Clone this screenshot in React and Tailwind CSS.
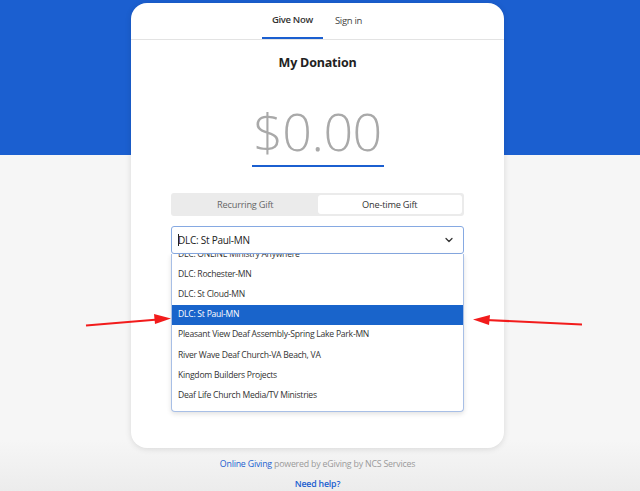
import { ChevronDown } from 'lucide-react';

const funds = [
  'DLC: ONLINE Ministry Anywhere',
  'DLC: Rochester-MN',
  'DLC: St Cloud-MN',
  'DLC: St Paul-MN',
  'Pleasant View Deaf Assembly-Spring Lake Park-MN',
  'River Wave Deaf Church-VA Beach, VA',
  'Kingdom Builders Projects',
  'Deaf Life Church Media/TV Ministries',
];

const Arrows = () => (
  <svg className="absolute left-0 top-0 pointer-events-none" width="640" height="491" viewBox="0 0 640 491">
    <line x1="86" y1="325.5" x2="158" y2="319.5" stroke="#f21b1b" strokeWidth="2" />
    <polygon points="171,318.5 154,314 155,324" fill="#f21b1b" />
    <line x1="582" y1="324.5" x2="486" y2="320" stroke="#f21b1b" strokeWidth="2" />
    <polygon points="473,319.5 490,315 489,325" fill="#f21b1b" />
  </svg>
);

export default function App() {
  return (
    <div
      className="relative w-[640px] h-[491px] overflow-hidden bg-[linear-gradient(to_bottom,#1b5fd0_0px,#1b5fd0_155px,#f6f6f6_155px,#f6f6f6_440px,#ececec_491px)] text-[#222]"
      style={{ fontFamily: '"Open Sans", "Noto Sans", sans-serif' }}
    >
      <div className="flex flex-col items-center pt-[3px] pr-[5px]">
        <div className="w-[373px] bg-white rounded-[16px] shadow-[0_1px_6px_rgba(0,0,0,0.12)] pb-[36px]">
          <div className="h-[37px] border-b border-[#e3e3e3] flex justify-center gap-[12px] pr-[11px]">
            <div className="h-[36px] w-[61px] flex items-center justify-center border-b-2 border-[#1b5fd0] text-[9.5px] tracking-[-0.35px] font-semibold text-[#333]">
              Give Now
            </div>
            <div className="h-[36px] flex items-center justify-center text-[9.5px] tracking-[-0.3px] text-[#444]">
              Sign in
            </div>
          </div>

          <h2 className="mt-[14px] h-[18px] leading-[18px] text-center text-[12.5px] tracking-[-0.2px] font-bold text-[#222]">
            My Donation
          </h2>

          <div className="mt-[29px] flex flex-col items-center">
            <div className="h-[60px] leading-[60px] text-[52px] font-light text-[#a9a9a9] tracking-[-0.5px]">
              $0.00
            </div>
            <div className="mt-[4px] w-[132px] h-[2px] bg-[#1b5fd0]" />
          </div>

          <div className="px-10 mt-[26px]">
            <div className="h-[23px] rounded-[3px] bg-[#ebebeb] p-[2px] flex">
              <div className="flex-1 flex items-center justify-center text-[9.2px] tracking-[-0.2px] text-[#666]">Recurring Gift</div>
              <div className="flex-1 flex items-center justify-center rounded-[3px] bg-white text-[9.2px] tracking-[-0.2px] text-[#333]">
                One-time Gift
              </div>
            </div>

            <div className="mt-[10px] h-[28px] rounded-[3px] border border-[#86a9e2] flex items-center pl-[6px] pr-[8px]">
              <span className="inline-block w-px h-[12px] bg-[#222] -mr-px" />
              <span className="flex-1 text-[10px] tracking-[-0.25px] text-[#222]">DLC: St Paul-MN</span>
              <ChevronDown size={12} strokeWidth={2.5} className="text-[#333]" />
            </div>

            <div className="h-[158px] overflow-hidden rounded-b-[4px] border border-t-0 border-[#a8bfe6] shadow-[0_2px_5px_rgba(0,0,0,0.12)] bg-white">
              <div className="-mt-[10px]">
                {funds.map((f) => (
                  <div
                    key={f}
                    className={`h-[20.2px] flex items-center px-[6px] text-[8.6px] tracking-[-0.25px] ${
                      f === 'DLC: St Paul-MN' ? 'bg-[#1964cb] text-white' : 'text-[#333]'
                    }`}
                  >
                    {f}
                  </div>
                ))}
              </div>
            </div>
          </div>
        </div>

        <div className="mt-[8px] h-[16px] leading-[16px] text-[8.8px] tracking-[-0.2px] text-[#9a9a9a]">
          <span className="text-[#1b5fd0]">Online Giving</span> powered by eGiving by NCS Services
        </div>
        <div className="mt-[4px] h-[16px] leading-[16px] text-[8.8px] tracking-[-0.2px] font-semibold text-[#1b5fd0]">Need help?</div>
      </div>
      <Arrows />
    </div>
  );
}
